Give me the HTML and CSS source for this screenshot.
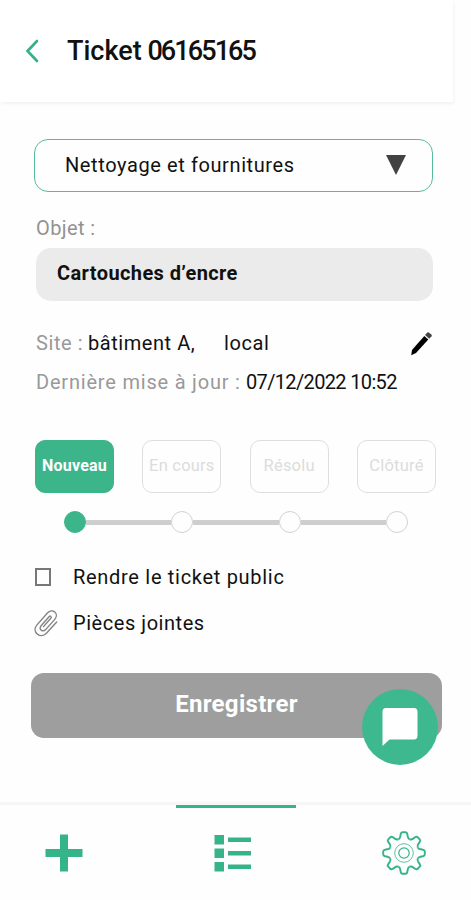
FILE: index.html
```html
<!DOCTYPE html>
<html lang="fr">
<head>
  <meta charset="UTF-8">
  <meta name="viewport" content="width=device-width, initial-scale=1.0">
  <title>Ticket 06165165</title>
  <link rel="stylesheet" href="styles.css">
</head>
<body>
  <header class="header">
    <svg class="back-icon" viewBox="0 0 14 24" width="14" height="24">
      <path d="M12 2L2.5 12L12 22"/>
    </svg>
    <h1 class="title">Ticket <span class="title-number">06165165</span></h1>
  </header>

  <main class="content">
    <div class="select">
      <span class="select-value">Nettoyage et fournitures</span>
      <svg class="select-arrow" viewBox="0 0 20 20" width="20" height="20">
        <path d="M0 0H20L10 20Z"/>
      </svg>
    </div>

    <div class="label">Objet :</div>
    <div class="input">Cartouches d’encre</div>

    <div class="site">
      <div class="info"><span class="info-label site-label">Site :</span><span class="info-value building">bâtiment A,</span><span class="info-value local">local</span></div>
      <svg class="edit-icon" viewBox="0 0 24 26" width="24" height="26">
        <path d="M2.2 25.2L3 20L15.3 6L19.3 9.6L7 23Z"/>
        <path class="eraser" d="M16.1 5.1L18.3 2.6Q19 1.9 19.8 2.5L22.6 4.8Q23.2 5.5 22.6 6.2L20.2 8.7Z"/>
      </svg>
    </div>
    <div class="info updated"><span class="info-label updated-label">Dernière mise à jour :</span><span class="info-value date">07/12/2022 10:52</span></div>

    <div class="steps">
      <div class="step active">Nouveau</div>
      <div class="step">En cours</div>
      <div class="step">Résolu</div>
      <div class="step">Clôturé</div>
    </div>
    <div class="track">
      <span class="dot active"></span>
      <span class="line"></span>
      <span class="dot"></span>
      <span class="line"></span>
      <span class="dot"></span>
      <span class="line"></span>
      <span class="dot"></span>
    </div>

    <div class="option">
      <span class="option-icon"><span class="checkbox"></span></span>
      <span class="public">Rendre le ticket public</span>
    </div>
    <div class="option">
      <span class="option-icon">
        <svg class="clip-icon" viewBox="0 0 26 30" width="26" height="30">
          <path d="M23.7 14L13.4 25.3C7.5 31.5 -1.5 24 3.6 17.4L14.2 5.2C19.3 -0.5 26.6 5.5 21.8 11.4L12.6 21.6C9.7 24.6 5.4 21.2 7.9 18L16.2 8.5C17.2 7.5 18.9 8.8 18 10L10.5 18.6"/>
        </svg>
      </span>
      <span class="attachments">Pièces jointes</span>
    </div>

    <div class="submit">
      <span class="submit-text">Enregistrer</span>
      <div class="chat">
        <svg viewBox="0 0 36 38" width="36" height="38">
          <path d="M4 0H32Q35.5 0 35.5 4V27.5Q35.5 31.5 32 31.5H7.5L0.5 38V4Q0.5 0 4 0Z"/>
        </svg>
      </div>
    </div>
  </main>

  <nav class="nav">
    <div class="nav-item add">
      <svg viewBox="0 0 38 38" width="38" height="38">
        <path d="M15 0.5H23V15H37.5V23H23V37.5H15V23H0.5V15H15Z"/>
      </svg>
    </div>
    <div class="nav-item list current">
      <svg viewBox="0 0 38 38" width="38" height="38">
        <path d="M0.5 0H10V9.5H0.5ZM0.5 13.5H10V23H0.5ZM0.5 27H10V36.5H0.5Z"/>
        <path d="M14 2.5H37V7H14ZM14 16H37V20.5H14ZM14 29.5H37V34H14Z"/>
      </svg>
    </div>
    <div class="nav-item settings">
      <svg class="gear-icon" viewBox="-23 -23 46 46" width="46" height="46">
        <defs>
          <path id="tooth" d="M-5.7 -13.7C-4.2 -14.3 -3.9 -15.4 -3.7 -16.6L-3.3 -19Q-3 -20.8 -1.5 -20.8H1.5Q3 -20.8 3.3 -19L3.7 -16.6C3.9 -15.4 4.2 -14.3 5.7 -13.7"/>
        </defs>
        <use href="#tooth"/>
        <use href="#tooth" transform="rotate(45)"/>
        <use href="#tooth" transform="rotate(90)"/>
        <use href="#tooth" transform="rotate(135)"/>
        <use href="#tooth" transform="rotate(180)"/>
        <use href="#tooth" transform="rotate(225)"/>
        <use href="#tooth" transform="rotate(270)"/>
        <use href="#tooth" transform="rotate(315)"/>
        <circle class="ring" r="9.3"/>
        <circle class="hub" r="5.2"/>
      </svg>
    </div>
  </nav>
</body>
</html>
```
FILE: styles.css
```css
* {
  margin: 0;
  padding: 0;
  box-sizing: border-box;
}

body {
  font-family: Roboto, 'Liberation Sans', sans-serif;
  font-size: 20px;
  background: #fefefe;
  color: #111;
  width: 471px;
  height: 900px;
  display: flex;
  flex-direction: column;
  overflow: hidden;
  white-space: nowrap;
}

.header {
  width: 453px;
  height: 102px;
  flex: none;
  display: flex;
  align-items: center;
  padding-left: 25px;
  background: #fff;
  box-shadow: 1px 2px 3px rgba(0, 0, 0, 0.05);
}

.back-icon {
  fill: none;
  stroke: #2fb386;
  stroke-width: 2.6;
  stroke-linecap: round;
}

.title {
  margin-left: 28px;
  font-size: 27px;
  font-weight: 500;
}

.title-number {
  margin-left: -1px;
  letter-spacing: -1.9px;
}

.content {
  flex: 1;
  padding: 37px 30px 0 34px;
}

.select {
  width: 399px;
  height: 53px;
  display: flex;
  align-items: center;
  justify-content: space-between;
  padding: 0 26px 2px 30px;
  border: 1.5px solid #56bc99;
  border-radius: 14px;
}

.select-value {
  letter-spacing: 0.6px;
}

.select-arrow {
  fill: #424242;
}

.label {
  margin: 24px 0 0 2px;
  height: 24px;
  line-height: 24px;
  letter-spacing: 0.4px;
  color: #929292;
}

.input {
  width: 397px;
  height: 53px;
  margin: 8px 0 0 2px;
  padding-left: 21px;
  line-height: 50px;
  font-weight: bold;
  letter-spacing: 0.4px;
  background: #ebebeb;
  border-radius: 15px;
}

.site {
  display: flex;
  justify-content: space-between;
  width: 399px;
  height: 26px;
  margin-top: 29px;
}

.info {
  display: flex;
  padding-left: 2px;
  line-height: 26px;
}

.info-label {
  color: #999;
}

.site-label {
  width: 52px;
  letter-spacing: 0.6px;
}

.building {
  width: 136px;
  letter-spacing: 0.55px;
}

.local {
  letter-spacing: 0.6px;
}

.eraser {
  fill: #444;
}

.updated {
  margin-top: 13px;
}

.updated-label {
  width: 210px;
  letter-spacing: 0.8px;
}

.date {
  letter-spacing: -0.65px;
}

.steps {
  display: flex;
  justify-content: space-between;
  width: 402px;
  margin-top: 45px;
  padding-left: 1px;
}

.step {
  width: 79px;
  height: 53px;
  line-height: 49px;
  text-align: center;
  font-size: 16.5px;
  letter-spacing: 0.2px;
  color: #dcdcdc;
  border: 1.5px solid #dedede;
  border-radius: 10px;
}

.step.active {
  font-size: 16px;
  color: #fff;
  font-weight: bold;
  background: #3db58b;
  border-color: #3db58b;
}

.track {
  display: flex;
  align-items: center;
  width: 344px;
  margin: 18px 0 0 30px;
}

.dot {
  width: 22px;
  height: 22px;
  border: 1.5px solid #d2d2d2;
  border-radius: 50%;
}

.dot.active {
  background: #3db58b;
  border-color: #3db58b;
}

.line {
  flex: 1;
  height: 5px;
  background: #cecece;
}

.option {
  display: flex;
  align-items: center;
  height: 46px;
}

.track + .option {
  margin-top: 21px;
}

.option-icon {
  display: flex;
  width: 39px;
}

.public {
  letter-spacing: 0.7px;
}

.attachments {
  letter-spacing: 0.55px;
}

.checkbox {
  width: 16px;
  height: 18px;
  margin-left: 1px;
  border: 2px solid #777;
}

.clip-icon {
  margin-left: -1px;
  fill: none;
  stroke: #848484;
  stroke-width: 1.4;
  stroke-linecap: round;
}

.submit {
  position: relative;
  width: 411px;
  height: 65px;
  margin: 27px 0 0 -3px;
  line-height: 63px;
  text-align: center;
  font-size: 24px;
  font-weight: bold;
  letter-spacing: 0.3px;
  color: #fff;
  background: #9e9e9e;
  border-radius: 13px;
}

/* floating chat button */
.chat {
  position: absolute;
  top: 16px;
  right: 4px;
  width: 76px;
  height: 76px;
  display: flex;
  align-items: center;
  justify-content: center;
  background: #3eb88e;
  border-radius: 50%;
}

.chat svg {
  fill: #fff;
}

.nav {
  display: flex;
  justify-content: space-between;
  flex: none;
  height: 98px;
  padding: 0 7px 0 4px;
  border-top: 3px solid #f6f6f6;
}

.nav-item {
  width: 120px;
  display: flex;
  align-items: center;
  justify-content: center;
  fill: #35b489;
}

.nav-item.list {
  margin-left: 4px;
  padding-right: 7px;
}

.nav-item.current {
  border-top: 3px solid #35b489;
}

.gear-icon {
  fill: none;
  stroke: #35b489;
  stroke-width: 1.9;
}

.ring {
  stroke-width: 0.8;
}

.hub {
  stroke-width: 1.2;
}
```
